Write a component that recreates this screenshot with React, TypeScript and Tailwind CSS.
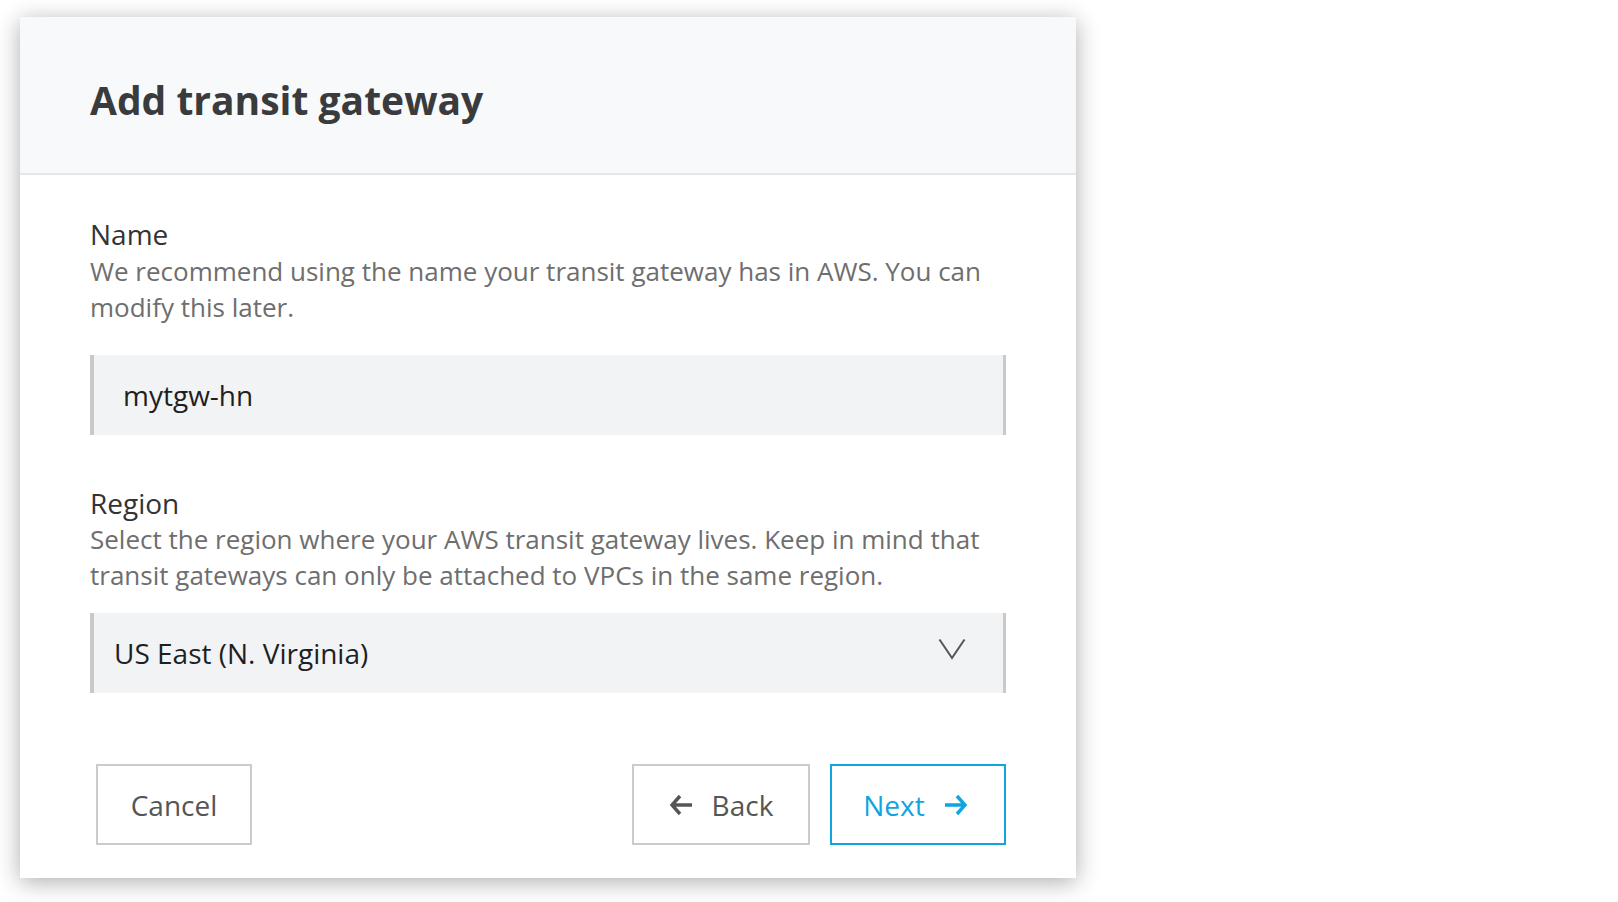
function ArrowLeft() {
  return (
    <svg width="24" height="22" viewBox="0 0 24 22" fill="none">
      <path d="M11 2L3 11l8 9M3 11h20" stroke="currentColor" strokeWidth="3.4" strokeLinejoin="miter" />
    </svg>
  );
}

function ArrowRight() {
  return (
    <svg width="24" height="22" viewBox="0 0 24 22" fill="none">
      <path d="M13 2l8 9-8 9M21 11H1" stroke="currentColor" strokeWidth="3.4" strokeLinejoin="miter" />
    </svg>
  );
}

function Chevron() {
  return (
    <svg width="28" height="22" viewBox="0 0 28 22" fill="none">
      <path d="M1.5 1.5L14 20L26.5 1.5" stroke="#555" strokeWidth="2" />
    </svg>
  );
}

export default function App() {
  return (
    <div className="w-[1618px] h-[902px] bg-white font-['Open_Sans',sans-serif] pt-[17px] pl-[20px]">
      <div className="w-[1056px] bg-white shadow-[0_4px_22px_rgba(0,0,0,0.32)]">
        <div className="bg-[#f8f9fb] border-b-2 border-[#e6e7ea] pl-[70px] pt-[56px] pb-[46px]">
          <h1 className="text-[39px] leading-[54px] font-bold text-[#3a3b3d]">Add transit gateway</h1>
        </div>
        <div className="px-[70px] pt-[43px] pb-[33px]">
          <div>
            <label className="block text-[28px] leading-[32px] text-[#333]">Name</label>
            <p className="mt-[3px] text-[26px] leading-[36px] text-[#6e6e6e]">
              We recommend using the name your transit gateway has in AWS. You can modify this later.
            </p>
            <div className="mt-[30px] h-[80px] bg-[#f2f3f5] border-l-[4px] border-r-[3px] border-[#c9c9c9] flex items-center pl-[29px]">
              <span className="text-[28px] text-[#1f1f1f]">mytgw-hn</span>
            </div>
          </div>
          <div className="mt-[52px]">
            <label className="block text-[28px] leading-[32px] text-[#333]">Region</label>
            <p className="mt-[2px] text-[26px] leading-[36px] text-[#6e6e6e]">
              Select the region where your AWS transit gateway lives. Keep in mind that transit gateways can only be attached to VPCs in the same region.
            </p>
            <div className="mt-[20px] h-[80px] bg-[#f2f3f5] border-l-[4px] border-r-[3px] border-[#c9c9c9] flex items-center justify-between pl-[20px] pr-[37px]">
              <span className="text-[28px] text-[#1f1f1f]">US East (N. Virginia)</span>
              <div className="-mt-[8px]">
                <Chevron />
              </div>
            </div>
          </div>
          <div className="mt-[71px] flex items-center justify-between pl-[6px]">
            <button className="w-[156px] h-[81px] border-2 border-[#cbcbcb] text-[28px] text-[#555]">Cancel</button>
            <div className="flex gap-[20px]">
              <button className="w-[178px] h-[81px] border-2 border-[#cbcbcb] text-[28px] text-[#555] flex items-center justify-center gap-[19px]">
                <ArrowLeft />
                <span>Back</span>
              </button>
              <button className="w-[176px] h-[81px] border-2 border-[#0ea5e0] text-[28px] text-[#0ea5e0] flex items-center justify-center gap-[19px] pr-[5px]">
                <span>Next</span>
                <ArrowRight />
              </button>
            </div>
          </div>
        </div>
      </div>
    </div>
  );
}
